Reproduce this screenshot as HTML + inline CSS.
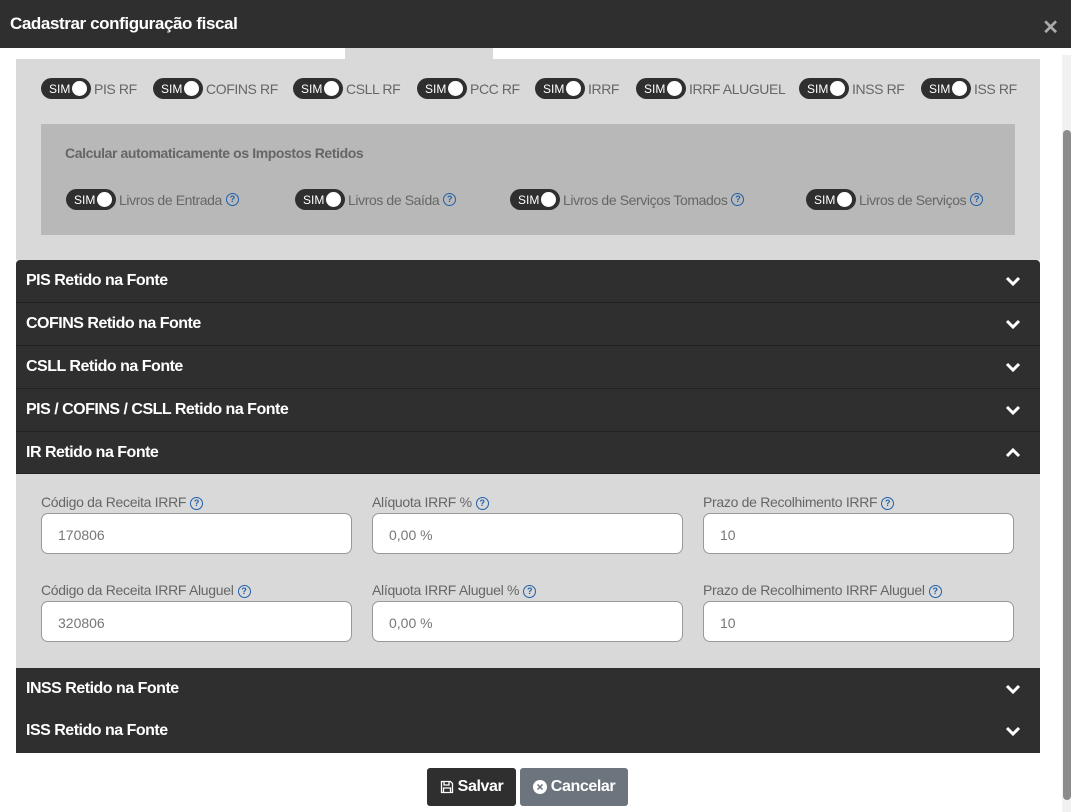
<!DOCTYPE html>
<html><head><meta charset="utf-8"><style>
*{box-sizing:border-box;margin:0;padding:0}
body{width:1071px;height:812px;overflow:hidden;background:#fff;font-family:"Liberation Sans",Arial,sans-serif;position:relative}
.hdr{position:absolute;left:0;top:0;width:1071px;height:48px;background:#2f2f2f;color:#fff}
.hdr h1{position:absolute;left:10px;top:14px;font-size:17px;font-weight:bold;letter-spacing:-0.4px}
.hdr .x{position:absolute;right:12px;top:15px;color:#aaa;font-size:20px;font-weight:bold}
.tab{position:absolute;left:345px;top:48px;width:148px;height:12px;background:#d9d9d9}
.panel{position:absolute;left:16px;top:59px;width:1024px;height:201px;background:#d9d9d9}
.tg{position:absolute;display:flex;align-items:center;font-size:14px;color:#666;letter-spacing:-0.4px}
.pill{width:50px;height:21px;border-radius:11px;background:#2f2f2f;color:#fff;font-size:12px;position:relative;margin-right:3px;letter-spacing:0}
.pill span{position:absolute;left:8px;top:4px}
.pill i{position:absolute;right:4px;top:3px;width:15px;height:15px;border-radius:50%;background:#fff}
.q{display:inline-block;width:13px;height:13px;border:1.5px solid #1f5fa8;border-radius:50%;color:#1f5fa8;font-size:9px;font-weight:bold;text-align:center;line-height:10px;margin-left:4px;vertical-align:middle;letter-spacing:0}
.inner{position:absolute;left:41px;top:124px;width:974px;height:111px;background:#b8b8b8}
.inner h3{position:absolute;left:24px;top:21px;font-size:14px;color:#666;font-weight:bold;letter-spacing:-0.4px}
.acc{position:absolute;left:16px;width:1024px;height:43px;background:#2f2f2f;color:#fff;border-bottom:1px solid #222}
.acc b{position:absolute;left:10px;top:12px;font-size:16px;letter-spacing:-0.5px}
.acc svg{position:absolute;right:19px;top:15px}
.body{position:absolute;left:16px;top:474px;width:1024px;height:194px;background:#d9d9d9}
.lbl{position:absolute;font-size:14px;color:#666;letter-spacing:-0.3px}
.inp{position:absolute;width:311px;height:41px;background:#fff;border:1px solid #999;border-radius:7px;font-size:14px;color:#777;padding:13px 0 0 16px}
.btn{position:absolute;top:768px;height:38px;border-radius:3px;color:#fff;font-size:16px;font-weight:bold;display:flex;align-items:center;justify-content:center;gap:4px;letter-spacing:-0.4px}
.sb{position:absolute;left:1062px;top:55px;width:9px;height:757px;background:#f1f1f1}
.sb i{position:absolute;left:1px;top:75px;width:8px;height:670px;background:#8c8c8c;border-radius:4px}
</style></head><body>
<div class="hdr"><h1>Cadastrar configuração fiscal</h1><span class="x">✕</span></div>
<div class="tab"></div>
<div class="panel"></div>
<div class="tg" style="left:41px;top:78px"><div class="pill"><span>SIM</span><i></i></div>PIS RF</div>
<div class="tg" style="left:153px;top:78px"><div class="pill"><span>SIM</span><i></i></div>COFINS RF</div>
<div class="tg" style="left:293px;top:78px"><div class="pill"><span>SIM</span><i></i></div>CSLL RF</div>
<div class="tg" style="left:417px;top:78px"><div class="pill"><span>SIM</span><i></i></div>PCC RF</div>
<div class="tg" style="left:535px;top:78px"><div class="pill"><span>SIM</span><i></i></div>IRRF</div>
<div class="tg" style="left:636px;top:78px"><div class="pill"><span>SIM</span><i></i></div>IRRF ALUGUEL</div>
<div class="tg" style="left:799px;top:78px"><div class="pill"><span>SIM</span><i></i></div>INSS RF</div>
<div class="tg" style="left:921px;top:78px"><div class="pill"><span>SIM</span><i></i></div>ISS RF</div>
<div class="inner"><h3>Calcular automaticamente os Impostos Retidos</h3></div>
<div class="tg" style="left:66px;top:189px"><div class="pill"><span>SIM</span><i></i></div>Livros de Entrada<span class="q">?</span></div>
<div class="tg" style="left:295px;top:189px"><div class="pill"><span>SIM</span><i></i></div>Livros de Saída<span class="q">?</span></div>
<div class="tg" style="left:510px;top:189px"><div class="pill"><span>SIM</span><i></i></div>Livros de Serviços Tomados<span class="q">?</span></div>
<div class="tg" style="left:806px;top:189px"><div class="pill"><span>SIM</span><i></i></div>Livros de Serviços<span class="q">?</span></div>

<div class="acc" style="top:260px;border-radius:4px 4px 0 0"><b>PIS Retido na Fonte</b><svg width="16" height="12"><path d="M2 3l6 6 6-6" stroke="#fff" stroke-width="3" fill="none"/></svg></div>
<div class="acc" style="top:303px"><b>COFINS Retido na Fonte</b><svg width="16" height="12"><path d="M2 3l6 6 6-6" stroke="#fff" stroke-width="3" fill="none"/></svg></div>
<div class="acc" style="top:346px"><b>CSLL Retido na Fonte</b><svg width="16" height="12"><path d="M2 3l6 6 6-6" stroke="#fff" stroke-width="3" fill="none"/></svg></div>
<div class="acc" style="top:389px"><b>PIS / COFINS / CSLL Retido na Fonte</b><svg width="16" height="12"><path d="M2 3l6 6 6-6" stroke="#fff" stroke-width="3" fill="none"/></svg></div>
<div class="acc" style="top:432px;height:42px"><b>IR Retido na Fonte</b><svg width="16" height="12"><path d="M2 9l6-6 6 6" stroke="#fff" stroke-width="3" fill="none"/></svg></div>
<div class="body"></div>
<div class="lbl" style="left:41px;top:494px">Código da Receita IRRF<span class="q">?</span></div>
<div class="lbl" style="left:372px;top:494px">Alíquota IRRF %<span class="q">?</span></div>
<div class="lbl" style="left:703px;top:494px">Prazo de Recolhimento IRRF<span class="q">?</span></div>
<div class="inp" style="left:41px;top:513px">170806</div>
<div class="inp" style="left:372px;top:513px">0,00 %</div>
<div class="inp" style="left:703px;top:513px">10</div>
<div class="lbl" style="left:41px;top:582px">Código da Receita IRRF Aluguel<span class="q">?</span></div>
<div class="lbl" style="left:372px;top:582px">Alíquota IRRF Aluguel %<span class="q">?</span></div>
<div class="lbl" style="left:703px;top:582px">Prazo de Recolhimento IRRF Aluguel<span class="q">?</span></div>
<div class="inp" style="left:41px;top:601px">320806</div>
<div class="inp" style="left:372px;top:601px">0,00 %</div>
<div class="inp" style="left:703px;top:601px">10</div>
<div class="acc" style="top:668px"><b>INSS Retido na Fonte</b><svg width="16" height="12"><path d="M2 3l6 6 6-6" stroke="#fff" stroke-width="3" fill="none"/></svg></div>
<div class="acc" style="top:710px;border-bottom:none"><b>ISS Retido na Fonte</b><svg width="16" height="12"><path d="M2 3l6 6 6-6" stroke="#fff" stroke-width="3" fill="none"/></svg></div>

<div class="btn" style="left:427px;width:89px;background:#2f2f2f"><svg width="14" height="14" viewBox="0 0 14 14"><path d="M1.5 1.5h9l2 2v9h-11z M4 1.5v3.5h5v-3.5 M3.5 12.5v-4.5h7v4.5" stroke="#fff" stroke-width="1.3" fill="none"/></svg>Salvar</div>
<div class="btn" style="left:520px;width:108px;background:#6c757d"><svg width="14" height="14" viewBox="0 0 14 14"><circle cx="7" cy="7" r="7" fill="#fff"/><path d="M4.5 4.5l5 5M9.5 4.5l-5 5" stroke="#6c757d" stroke-width="1.5"/></svg>Cancelar</div>
<div class="sb"><i></i></div>
</body></html>
